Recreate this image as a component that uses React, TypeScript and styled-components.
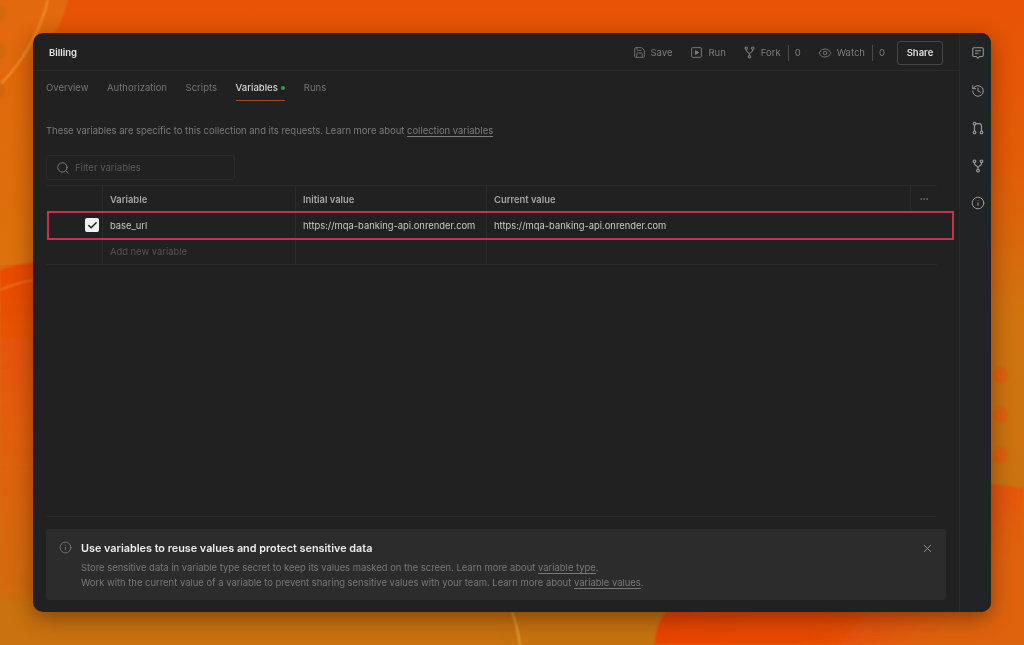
import React from 'react';
import styled, { createGlobalStyle } from 'styled-components';
import { Save, Eye, History, Info, Search, X, Check, Ellipsis } from 'lucide-react';

const GlobalStyle = createGlobalStyle`
  html, body {
    margin: 0;
    padding: 0;
    width: 1024px;
    height: 645px;
    overflow: hidden;
    background: #e85205;
    font-family: Inter, 'Noto Sans', sans-serif;
  }
`;

const Page = styled.div`
  position: relative;
  width: 1024px;
  height: 645px;
  box-sizing: border-box;
  padding: 33px;
  overflow: hidden;
`;

const Backdrop = styled.svg`
  position: absolute;
  left: 0;
  top: 0;
`;

const Window = styled.div`
  position: relative;
  display: flex;
  width: 958px;
  height: 579px;
  background: #212121;
  border-radius: 10px;
  overflow: hidden;
  box-shadow: 0 6px 22px rgba(40, 10, 0, 0.45);
  filter: blur(0.35px);
`;

const Main = styled.div`
  flex: 1;
  min-width: 0;
  display: flex;
  flex-direction: column;
`;

const Sidebar = styled.div`
  width: 32px;
  flex: none;
  box-sizing: border-box;
  border-left: 1px solid #292929;
  background: #222324;
  display: flex;
  flex-direction: column;
  align-items: center;
  padding: 13px 0 0 5px;
  gap: 23.5px;
  color: #999;
`;

const Header = styled.div`
  height: 38px;
  flex: none;
  box-sizing: border-box;
  border-bottom: 1px solid #2a2a2a;
  display: flex;
  align-items: center;
  padding: 2px 16px 0 16px;
`;

const Title = styled.div`
  font-size: 9.5px;
  font-weight: 600;
  color: #e6e6e6;
  flex: 1;
`;

const Action = styled.div<{ $gap: number }>`
  display: flex;
  align-items: center;
  gap: 5px;
  margin-right: ${(p) => p.$gap}px;
  font-size: 9.5px;
  color: #7d7d7d;
`;

const Divider = styled.span`
  width: 1px;
  height: 16px;
  background: #4a4a4a;
  margin: 0 1px 0 2px;
`;

const ShareButton = styled.div`
  width: 46px;
  height: 24px;
  box-sizing: border-box;
  border: 1px solid #474747;
  border-radius: 3px;
  display: flex;
  align-items: center;
  justify-content: center;
  font-size: 9.5px;
  font-weight: 600;
  color: #dedede;
`;

const Tabs = styled.div`
  height: 31px;
  flex: none;
  display: flex;
  gap: 18.6px;
  padding-left: 13px;
`;

const Tab = styled.div<{ $active?: boolean }>`
  height: 30px;
  box-sizing: border-box;
  padding-top: 4px;
  display: flex;
  align-items: center;
  gap: 3.5px;
  font-size: 9.5px;
  font-weight: ${(p) => (p.$active ? 500 : 400)};
  color: ${(p) => (p.$active ? '#d6d6d6' : '#757575')};
  border-bottom: 1px solid ${(p) => (p.$active ? '#a84a30' : 'transparent')};
`;

const Dot = styled.span`
  width: 4px;
  height: 4px;
  border-radius: 50%;
  background: #1fa35c;
`;

const Description = styled.p`
  margin: 22px 0 0 13px;
  height: 14px;
  line-height: 14px;
  font-size: 9.44px;
  color: #7b7b7b;
`;

const TextLink = styled.span`
  text-decoration: underline;
  text-underline-offset: 1.5px;
`;

const FilterBox = styled.div`
  margin: 17px 0 0 13px;
  width: 189px;
  height: 25px;
  box-sizing: border-box;
  border: 1px solid #2a2a2a;
  border-radius: 3px;
  display: flex;
  align-items: center;
  gap: 5px;
  padding-left: 9px;
  font-size: 9.5px;
  color: #5a5a5a;
  & > svg {
    color: #868686;
  }
`;

const Table = styled.div`
  margin: 5px 0 0 13px;
  width: 891px;
`;

const Row = styled.div<{ $height: number; $lift?: number }>`
  position: relative;
  display: grid;
  grid-template-columns: 56px 193px 191px 424px 27px;
  height: ${(p) => p.$height}px;
  box-sizing: border-box;
  border-top: 1px solid #2a2a2a;
  & > * {
    padding-bottom: ${(p) => p.$lift || 0}px;
  }
`;

const Cell = styled.div<{ $tone?: string; $weight?: number }>`
  display: flex;
  align-items: center;
  min-width: 0;
  box-sizing: border-box;
  padding-left: 7px;
  border-left: 1px solid #2a2a2a;
  font-size: 9.4px;
  white-space: nowrap;
  color: ${(p) => p.$tone || '#c9c9c9'};
  font-weight: ${(p) => p.$weight || 400};
`;

const CheckCell = styled.div`
  display: flex;
  align-items: center;
  justify-content: flex-end;
  padding-right: 3px;
`;

const CheckBox = styled.div`
  width: 14px;
  height: 14px;
  border-radius: 2px;
  background: #f2f2f2;
  color: #1d1d1d;
  display: flex;
  align-items: center;
  justify-content: center;
`;

const MoreCell = styled(Cell)`
  padding-left: 8px;
  color: #777;
`;

const Highlight = styled.div`
  position: absolute;
  z-index: 1;
  left: 1px;
  top: -2px;
  width: 907px;
  height: 29px;
  padding: 0;
  box-sizing: border-box;
  border: 2.5px solid #c8324b;
  pointer-events: none;
`;

const Spacer = styled.div`
  flex: 1;
`;

const Rule = styled.div`
  margin-left: 13px;
  width: 891px;
  height: 1px;
  background: #292929;
`;

const Banner = styled.div`
  position: relative;
  margin: 12px 13px;
  height: 71px;
  flex: none;
  box-sizing: border-box;
  background: #2c2c2c;
  border-radius: 3px;
  padding: 12px 0 0 13px;
  display: flex;
  gap: 9px;
  & > svg {
    flex: none;
    color: #8a8a8a;
  }
`;

const BannerBody = styled.div`
  display: flex;
  flex-direction: column;
`;

const BannerTitle = styled.div`
  font-size: 10.83px;
  font-weight: 600;
  line-height: 14px;
  color: #ececec;
  margin: 0.5px 0 4.5px;
`;

const BannerLine = styled.div`
  font-size: 9.43px;
  line-height: 15px;
  color: #787878;
`;

const CloseButton = styled.div`
  position: absolute;
  right: 12px;
  top: 13px;
  color: #9a9a9a;
  display: flex;
`;

type IconProps = { size: number };

const ForkIcon = ({ size }: IconProps) => (
  <svg width={size} height={size} viewBox="0 0 24 24" fill="none" stroke="currentColor" strokeWidth="2">
    <circle cx="6" cy="4" r="2.3" />
    <circle cx="18" cy="4" r="2.3" />
    <circle cx="12" cy="20" r="2.3" />
    <path d="M6 6.5V8c0 4 6 3.5 6 7.5v2M18 6.5V8c0 4-6 3.5-6 7.5" />
  </svg>
);

const RunIcon = ({ size }: IconProps) => (
  <svg width={size} height={size} viewBox="0 0 24 24" fill="none" stroke="currentColor" strokeWidth="1.7">
    <rect x="3" y="3" width="18" height="18" rx="2" />
    <path d="M10 8.5l6 3.5-6 3.5z" fill="currentColor" />
  </svg>
);

const ChatIcon = ({ size }: IconProps) => (
  <svg width={size} height={size} viewBox="0 0 24 24" fill="none" stroke="currentColor" strokeWidth="1.8">
    <path d="M5 3h14a2 2 0 0 1 2 2v11a2 2 0 0 1-2 2h-4l-3 3-3-3H5a2 2 0 0 1-2-2V5a2 2 0 0 1 2-2z" />
    <path d="M7 8h10M7 12.5h6" />
  </svg>
);

const PullIcon = ({ size }: IconProps) => (
  <svg width={size} height={size} viewBox="0 0 24 24" fill="none" stroke="currentColor" strokeWidth="2">
    <circle cx="6" cy="4.5" r="2.3" />
    <circle cx="6" cy="19.5" r="2.3" />
    <circle cx="18" cy="19.5" r="2.3" />
    <path d="M6 7v10M8.5 4.5H14c2.5 0 4 1.5 4 4V17" />
  </svg>
);

const Backgound = () => (
  <Backdrop width="1024" height="645" viewBox="0 0 1024 645">
    <defs>
      <linearGradient id="base" x1="0" y1="0" x2="0" y2="1">
        <stop offset="0" stopColor="#e85305" />
        <stop offset="0.25" stopColor="#e35c08" />
        <stop offset="0.5" stopColor="#cf7410" />
        <stop offset="1" stopColor="#c6720f" />
      </linearGradient>
      <linearGradient id="leftRed" x1="0" y1="0" x2="0" y2="1">
        <stop offset="0" stopColor="#ea4a04" />
        <stop offset="0.45" stopColor="#e2600a" />
        <stop offset="1" stopColor="#cd7010" />
      </linearGradient>
      <linearGradient id="rightRed" x1="0" y1="0" x2="1" y2="0.4">
        <stop offset="0" stopColor="#e94003" />
        <stop offset="0.7" stopColor="#e84b05" />
        <stop offset="1" stopColor="#df640c" />
      </linearGradient>
      <linearGradient id="leftTop" x1="0" y1="0" x2="0" y2="1">
        <stop offset="0" stopColor="#e4640a" />
        <stop offset="1" stopColor="#dc720c" />
      </linearGradient>
      <filter id="soft">
        <feGaussianBlur stdDeviation="0.8" />
      </filter>
    </defs>
    <rect width="1024" height="645" fill="url(#base)" />
    <rect x="0" y="0" width="34" height="265" fill="url(#leftTop)" />
    <circle cx="-30" cy="-20" r="100" fill="#e2690b" filter="url(#soft)" />
    <path d="M0 270 Q18 263 40 262 L40 645 L0 645 Z" fill="url(#leftRed)" filter="url(#soft)" />
    <path d="M0 645 L0 600 L500 612 L500 645 Z" fill="#c9720f" />
    <path
      d="M655 645 C655 620 670 600 700 580 L991 484 L1024 488 L1024 645 Z"
      fill="url(#rightRed)"
      filter="url(#soft)"
    />
    <g filter="url(#soft)" fill="none" strokeWidth="1.2">
      <path d="M48 0 C40 32 22 62 0 85" stroke="#f6a83a" />
      <path d="M0 290 Q16 283 33 280" stroke="#ef8a3a" />
      <path d="M512 612 Q518 628 520 645" stroke="#f0c040" />
    </g>
    <g fill="#d0680f" filter="url(#soft)">
      <circle cx="-2" cy="13" r="8" />
      <circle cx="-2" cy="51" r="8" />
      <circle cx="-2" cy="91" r="8" />
    </g>
    <g fill="#df620e" filter="url(#soft)">
      <circle cx="1001" cy="375" r="8" />
      <circle cx="1001" cy="415" r="8" />
      <circle cx="1001" cy="455" r="8" />
    </g>
  </Backdrop>
);

const App = () => {
  return (
    <Page>
      <GlobalStyle />
      <Backgound />
      <Window>
        <Main>
          <Header>
            <Title>Billing</Title>
            <Action $gap={18}>
              <Save size={13} strokeWidth={1.5} />
              Save
            </Action>
            <Action $gap={17}>
              <RunIcon size={13} />
              Run
            </Action>
            <Action $gap={17}>
              <ForkIcon size={13} />
              Fork
              <Divider />0
            </Action>
            <Action $gap={12}>
              <Eye size={14} strokeWidth={1.5} />
              Watch
              <Divider />0
            </Action>
            <ShareButton>Share</ShareButton>
          </Header>
          <Tabs>
            <Tab>Overview</Tab>
            <Tab>Authorization</Tab>
            <Tab>Scripts</Tab>
            <Tab $active>
              Variables
              <Dot />
            </Tab>
            <Tab>Runs</Tab>
          </Tabs>
          <Description>
            These variables are specific to this collection and its requests. Learn more about{' '}
            <TextLink>collection variables</TextLink>
          </Description>
          <FilterBox>
            <Search size={14} strokeWidth={1.5} />
            Filter variables
          </FilterBox>
          <Table>
            <Row $height={27}>
              <div />
              <Cell $tone="#a5a5a5" $weight={600}>Variable</Cell>
              <Cell $tone="#a5a5a5" $weight={600}>Initial value</Cell>
              <Cell $tone="#a5a5a5" $weight={600}>Current value</Cell>
              <MoreCell>
                <Ellipsis size={10} strokeWidth={2} />
              </MoreCell>
            </Row>
            <Row $height={26} $lift={1}>
              <CheckCell>
                <CheckBox>
                  <Check size={11} strokeWidth={3.2} />
                </CheckBox>
              </CheckCell>
              <Cell>base_url</Cell>
              <Cell>https://mqa-banking-api.onrender.com</Cell>
              <Cell>https://mqa-banking-api.onrender.com</Cell>
              <div />
              <Highlight />
            </Row>
            <Row $height={26} $lift={1}>
              <div />
              <Cell $tone="#555">Add new variable</Cell>
              <Cell />
              <Cell />
              <div />
            </Row>
            <Row $height={1} />
          </Table>
          <Spacer />
          <Rule />
          <Banner>
            <Info size={13} strokeWidth={1.3} />
            <BannerBody>
              <BannerTitle>Use variables to reuse values and protect sensitive data</BannerTitle>
              <BannerLine>
                Store sensitive data in variable type secret to keep its values masked on the screen. Learn more
                about <TextLink>variable type</TextLink>.
              </BannerLine>
              <BannerLine>
                Work with the current value of a variable to prevent sharing sensitive values with your team. Learn
                more about <TextLink>variable values</TextLink>.
              </BannerLine>
            </BannerBody>
            <CloseButton>
              <X size={13} strokeWidth={1.6} />
            </CloseButton>
          </Banner>
        </Main>
        <Sidebar>
          <ChatIcon size={14} />
          <History size={14} strokeWidth={1.7} />
          <PullIcon size={14} />
          <ForkIcon size={14} />
          <Info size={14} strokeWidth={1.7} />
        </Sidebar>
      </Window>
    </Page>
  );
};

export default App;
